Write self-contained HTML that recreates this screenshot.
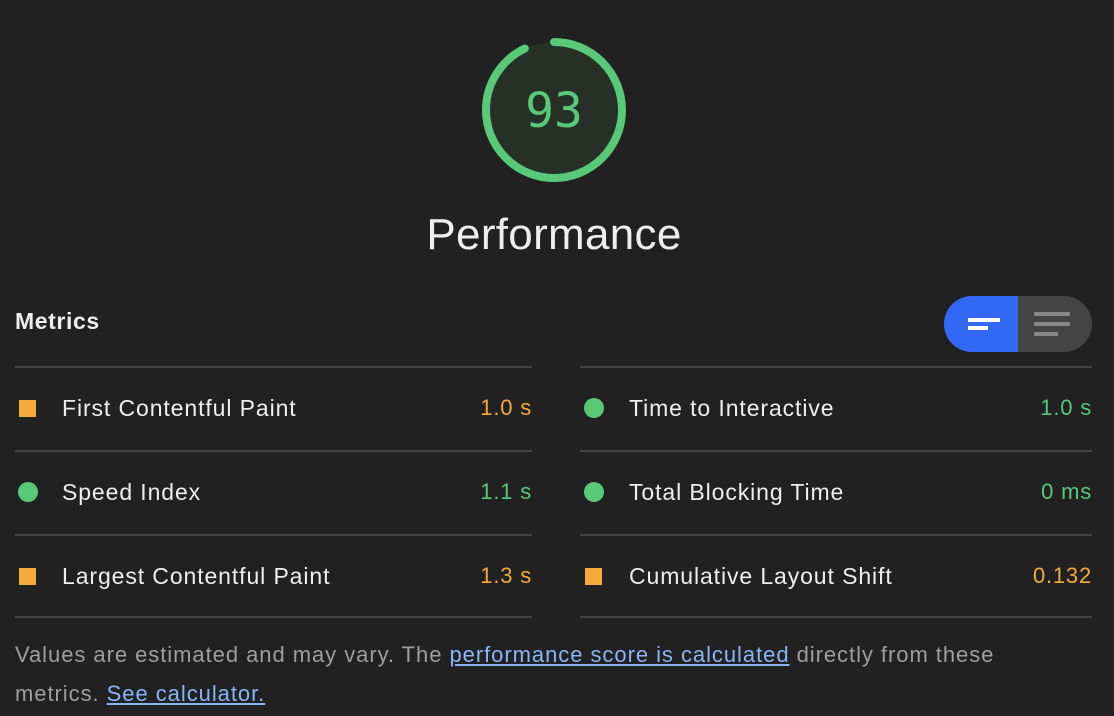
<!DOCTYPE html>
<html><head><style>
body{margin:0;width:1114px;height:716px;background:#212121;font-family:"Liberation Sans",Arial,sans-serif;overflow:hidden;position:relative;color:#fff}
.a{position:absolute}
.sep{position:absolute;height:2px;background:#444}
.lbl{position:absolute;font-size:23px;letter-spacing:0.9px;color:#eee;line-height:26px}
.val{position:absolute;font-size:22px;letter-spacing:0.8px;line-height:26px;text-align:right}
.o{color:#f5a93a}.g{color:#57c977}
.sq{position:absolute;width:17px;height:17px;background:#f5a93a}
.dot{position:absolute;width:20px;height:20px;border-radius:50%;background:#57c977}
a{color:#8ab4f8}
</style></head><body>
<svg class="a" style="left:474px;top:30px" width="160" height="160" viewBox="0 0 160 160">
<circle cx="80" cy="80" r="68" fill="#263027"/>
<circle cx="80" cy="80" r="68" fill="none" stroke="#57c977" stroke-width="8" stroke-linecap="round" stroke-dasharray="397 430" transform="rotate(-90 80 80)"/>
<text x="80" y="97" text-anchor="middle" font-family="DejaVu Sans Mono,Liberation Mono,monospace" font-size="48" fill="#57c977">93</text>
</svg>
<div class="a" style="left:0;width:1108px;top:210px;text-align:center;font-size:44px;letter-spacing:0.3px;color:#eee">Performance</div>
<div class="a" style="left:15px;top:308px;font-size:23px;letter-spacing:0.6px;font-weight:bold;color:#eee">Metrics</div>
<div class="a" style="left:944px;top:296px;width:148px;height:56px;border-radius:28px;background:#444;overflow:hidden">
<div class="a" style="left:0;top:0;width:74px;height:56px;background:#3169f5"></div>
<div class="a" style="left:24px;top:22px;width:32px;height:4px;background:#fff"></div>
<div class="a" style="left:24px;top:30px;width:20px;height:4px;background:#fff"></div>
<div class="a" style="left:90px;top:16px;width:36px;height:4px;background:#888"></div>
<div class="a" style="left:90px;top:26px;width:36px;height:4px;background:#888"></div>
<div class="a" style="left:90px;top:36px;width:24px;height:4px;background:#888"></div>
</div>
<div class="sep" style="left:15px;width:517px;top:366px"></div>
<div class="sep" style="left:580px;width:512px;top:366px"></div>
<div class="sep" style="left:15px;width:517px;top:450px"></div>
<div class="sep" style="left:580px;width:512px;top:450px"></div>
<div class="sep" style="left:15px;width:517px;top:534px"></div>
<div class="sep" style="left:580px;width:512px;top:534px"></div>
<div class="sep" style="left:15px;width:517px;top:616px"></div>
<div class="sep" style="left:580px;width:512px;top:616px"></div>

<div class="sq" style="left:19px;top:400px"></div>
<div class="lbl" style="left:62px;top:395px">First Contentful Paint</div>
<div class="val o" style="right:582px;top:395px">1.0 s</div>
<div class="dot" style="left:584px;top:398px"></div>
<div class="lbl" style="left:629px;top:395px">Time to Interactive</div>
<div class="val g" style="right:22px;top:395px">1.0 s</div>

<div class="dot" style="left:18px;top:482px"></div>
<div class="lbl" style="left:62px;top:479px">Speed Index</div>
<div class="val g" style="right:582px;top:479px">1.1 s</div>
<div class="dot" style="left:584px;top:482px"></div>
<div class="lbl" style="left:629px;top:479px">Total Blocking Time</div>
<div class="val g" style="right:22px;top:479px">0 ms</div>

<div class="sq" style="left:19px;top:568px"></div>
<div class="lbl" style="left:62px;top:563px">Largest Contentful Paint</div>
<div class="val o" style="right:582px;top:563px">1.3 s</div>
<div class="sq" style="left:585px;top:568px"></div>
<div class="lbl" style="left:629px;top:563px">Cumulative Layout Shift</div>
<div class="val o" style="right:22px;top:563px">0.132</div>

<div class="a" style="left:15px;top:635px;width:1000px;font-size:22px;letter-spacing:0.95px;line-height:39px;color:#9e9e9e">Values are estimated and may vary. The <a href="#">performance score is calculated</a> directly from these metrics. <a href="#">See calculator.</a></div>
</body></html>
